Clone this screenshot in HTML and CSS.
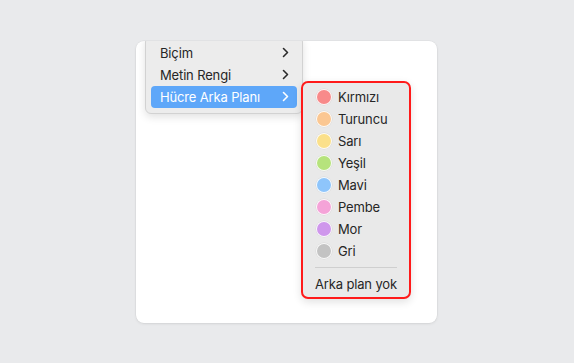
FILE: index.html
```html
<!DOCTYPE html>
<html lang="tr">
<head>
    <meta charset="UTF-8">
    <meta name="viewport" content="width=device-width, initial-scale=1.0">
    <title>Hücre Arka Planı</title>
    <link rel="stylesheet" href="styles.css">
</head>
<body>
    <div class="sheet">
        <!-- main context menu -->
        <ul class="menu">
            <li class="menu-item">Biçim
                <svg class="chev" viewBox="0 0 7 11"><path d="M1.5 1.5 L5.5 5.5 L1.5 9.5"/></svg>
            </li>
            <li class="menu-item">Metin Rengi
                <svg class="chev" viewBox="0 0 7 11"><path d="M1.5 1.5 L5.5 5.5 L1.5 9.5"/></svg>
            </li>
            <li class="menu-item active">Hücre Arka Planı
                <svg class="chev" viewBox="0 0 7 11"><path d="M1.5 1.5 L5.5 5.5 L1.5 9.5"/></svg>
            </li>
        </ul>

        <!-- colour submenu -->
        <ul class="submenu">
            <li class="sub-item"><span class="dot red"></span>Kırmızı</li>
            <li class="sub-item"><span class="dot orange"></span>Turuncu</li>
            <li class="sub-item"><span class="dot yellow"></span>Sarı</li>
            <li class="sub-item"><span class="dot green"></span>Yeşil</li>
            <li class="sub-item"><span class="dot blue"></span>Mavi</li>
            <li class="sub-item"><span class="dot pink"></span>Pembe</li>
            <li class="sub-item"><span class="dot purple"></span>Mor</li>
            <li class="sub-item"><span class="dot gray"></span>Gri</li>
            <li class="separator"></li>
            <li class="sub-item plain">Arka plan yok</li>
        </ul>
    </div>
</body>
</html>
```

FILE: styles.css
```css
* {
    margin: 0;
    padding: 0;
    box-sizing: border-box;
}

html, body {
    height: 100%;
}

body {
    font-family: 'Inter', 'Liberation Sans', sans-serif;
    font-size: 13px;
    letter-spacing: -0.15px;
    color: #262626;
    background: #e9eaec;
    display: flex;
    align-items: center;
    justify-content: center;
}

ul {
    list-style: none;
}

.sheet {
    position: relative;
    width: 301px;
    height: 282px;
    margin-right: 1px;
    background: #fff;
    border-radius: 8px;
    box-shadow: 0 1px 3px rgba(0, 0, 0, 0.08), 0 0 0 0.5px rgba(0, 0, 0, 0.05);
    overflow: hidden;
}

/* main menu */
.menu {
    position: absolute;
    left: 9px;
    top: -5px;
    width: 158px;
    padding: 5px;
    background: #ececec;
    border: 1px solid #d2d2d2;
    border-radius: 6px;
    box-shadow: 0 3px 8px rgba(0, 0, 0, 0.12);
}

.menu-item {
    height: 22px;
    padding: 0 8px 0 9px;
    display: flex;
    align-items: center;
    justify-content: space-between;
    border-radius: 4px;
    white-space: nowrap;
}

.menu-item.active {
    background: #5ea7f9;
    color: #fff;
}

.chev {
    width: 7px;
    height: 11px;
    fill: none;
    stroke: #2a2a2a;
    stroke-width: 1.6;
    stroke-linecap: round;
    stroke-linejoin: round;
}

.active .chev {
    stroke: #fff;
}

/* colour submenu */
.submenu {
    position: absolute;
    left: 165px;
    top: 40px;
    width: 110px;
    height: 218px;
    padding: 3px 4px 0 11px;
    background: #e9e9e9;
    border: 2px solid #ff1a1a;
    border-radius: 7px;
    box-shadow: 0 3px 8px rgba(0, 0, 0, 0.12);
}

.sub-item {
    height: 22px;
    display: flex;
    align-items: center;
    gap: 6px;
    white-space: nowrap;
}

.sub-item.plain {
    padding-left: 1px;
}

.dot {
    flex: none;
    width: 16px;
    height: 16px;
    margin-left: 2px;
    border-radius: 50%;
    border: 1px solid rgba(255, 255, 255, 0.9);
    box-shadow: 0 0 0 0.5px rgba(0, 0, 0, 0.08);
}

.red { background: #f88a8a; }
.orange { background: #fbc792; }
.yellow { background: #fbe08a; }
.green { background: #b6e37c; }
.blue { background: #8ec5fb; }
.pink { background: #f5a3d8; }
.purple { background: #cf97ec; }
.gray { background: #c3c3c3; }

.separator {
    height: 1px;
    margin: 5px 8px 5px 1px;
    background: #cfcfcf;
}
```
